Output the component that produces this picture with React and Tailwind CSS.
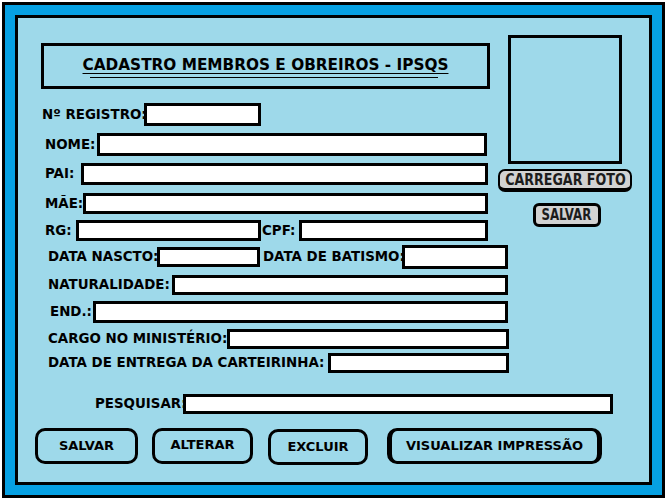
import React from "react";

const font = { fontFamily: '"DejaVu Sans", "Liberation Sans", sans-serif' };

function Field({ w, h }) {
  return <div className={`shrink-0 border-[3px] border-black bg-white ${w} ${h}`} />;
}

function Label({ w, children, extra = "" }) {
  return (
    <div className={`shrink-0 whitespace-nowrap text-[13.4px] font-bold leading-none text-black ${w} ${extra}`}>
      {children}
    </div>
  );
}

export default function App() {
  return (
    <div className="w-[669px] h-[503px] bg-white pt-[2px] pl-[2px]" style={font}>
      <div className="w-[663px] h-[496px] border-[3px] border-black bg-[#06a0e2] p-[10px]">
        <div className="w-full h-full border-[3px] border-black bg-[#9ed9ea] flex flex-col">
          <div className="flex items-start">
            <div className="w-[472px] shrink-0 flex flex-col">
              <div className="ml-[23px] mt-[25px] w-[449px] h-[46px] border-[3px] border-black flex flex-col items-center pt-[9px]">
                <span className="text-[15.3px] font-bold leading-[20px] text-black underline underline-offset-[3px] decoration-1 whitespace-nowrap">
                  CADASTRO MEMBROS E OBREIROS - IPSQS
                </span>
                <div className="w-[348px] h-[1px] bg-black mt-[2px] ml-[-4px]" />
              </div>
              <div className="flex items-center pl-[24px] mt-[14px]">
                <Label w="w-[102px]">Nº REGISTRO:</Label>
                <Field w="w-[117px]" h="h-[23px]" />
              </div>
              <div className="flex items-center pl-[27px] mt-[7px]">
                <Label w="w-[52px]">NOME:</Label>
                <Field w="w-[390px]" h="h-[23px]" />
              </div>
              <div className="flex items-center pl-[27px] mt-[7px]">
                <Label w="w-[36px]">PAI:</Label>
                <Field w="w-[407px]" h="h-[22px]" />
              </div>
              <div className="flex items-center pl-[27px] mt-[8px]">
                <Label w="w-[38px]">MÃE:</Label>
                <Field w="w-[405px]" h="h-[21px]" />
              </div>
              <div className="flex items-center pl-[27px] mt-[6px]">
                <Label w="w-[31px]">RG:</Label>
                <Field w="w-[185px]" h="h-[21px]" />
                <Label w="w-[37px]" extra="ml-[1px]">CPF:</Label>
                <Field w="w-[189px]" h="h-[21px]" />
              </div>
            </div>
            <div className="w-[150px] shrink-0 flex flex-col items-center">
              <div className="mt-[17px] w-[114px] h-[129px] border-[3px] border-black" />
              <div className="mt-[5px] w-[134px] h-[23px] rounded-[7px] border-[2px] border-b-[4px] border-black bg-[#d2d2d2] flex items-center justify-center overflow-visible">
                <span
                  className="inline-block scale-x-[0.88] text-[16px] font-bold leading-none text-[#1c1c1c] whitespace-nowrap"
                  style={{ fontFamily: '"DejaVu Sans Condensed", "DejaVu Sans", sans-serif' }}
                >
                  CARREGAR FOTO
                </span>
              </div>
              <div className="mt-[11px] ml-[3px] w-[68px] h-[24px] rounded-[6px] border-[3px] border-black bg-[#d2d2d2] flex items-center justify-center">
                <span
                  className="inline-block scale-x-[0.82] text-[16px] font-bold leading-none text-[#1c1c1c] whitespace-nowrap"
                  style={{ fontFamily: '"DejaVu Sans Condensed", "DejaVu Sans", sans-serif' }}
                >
                  SALVAR
                </span>
              </div>
            </div>
          </div>

          <div className="flex items-center pl-[30px] mt-[4px] h-[24px]">
            <Label w="w-[109px]">DATA NASCTO:</Label>
            <Field w="w-[103px]" h="h-[20px]" />
            <Label w="w-[139px]" extra="ml-[3px]">DATA DE BATISMO:</Label>
            <Field w="w-[106px]" h="h-[24px]" />
          </div>
          <div className="flex items-center pl-[30px] mt-[6px]">
            <Label w="w-[124px]">NATURALIDADE:</Label>
            <Field w="w-[336px]" h="h-[20px]" />
          </div>
          <div className="flex items-center pl-[32px] mt-[6px]">
            <Label w="w-[43px]">END.:</Label>
            <Field w="w-[415px]" h="h-[22px]" />
          </div>
          <div className="flex items-center pl-[30px] mt-[6px]">
            <Label w="w-[179px]">CARGO NO MINISTÉRIO:</Label>
            <Field w="w-[282px]" h="h-[20px]" />
          </div>
          <div className="flex items-center pl-[30px] mt-[4px]">
            <Label w="w-[280px]">DATA DE ENTREGA DA CARTEIRINHA:</Label>
            <Field w="w-[181px]" h="h-[20px]" />
          </div>
          <div className="flex items-center pl-[77px] mt-[21px]">
            <Label w="w-[88px]">PESQUISAR:</Label>
            <Field w="w-[430px]" h="h-[20px]" />
          </div>

          <div className="flex items-start pl-[17px] mt-[14px]">
            <div className="w-[103px] h-[36px] rounded-[10px] border-[3px] border-black flex items-center justify-center text-[13px] font-bold text-black">
              SALVAR
            </div>
            <div className="ml-[14px] w-[101px] h-[36px] rounded-[10px] border-[3px] border-black flex items-center justify-center text-[13px] font-bold text-black pb-[3px]">
              ALTERAR
            </div>
            <div className="ml-[15px] mt-[1px] w-[100px] h-[36px] rounded-[10px] border-[3px] border-black flex items-center justify-center text-[13px] font-bold text-black">
              EXCLUIR
            </div>
            <div className="ml-[19px] w-[215px] h-[36px] rounded-[10px] border-[3px] border-x-[5px] border-black flex items-center justify-center text-[13px] font-bold text-black">
              VISUALIZAR IMPRESSÃO
            </div>
          </div>
        </div>
      </div>
    </div>
  );
}
